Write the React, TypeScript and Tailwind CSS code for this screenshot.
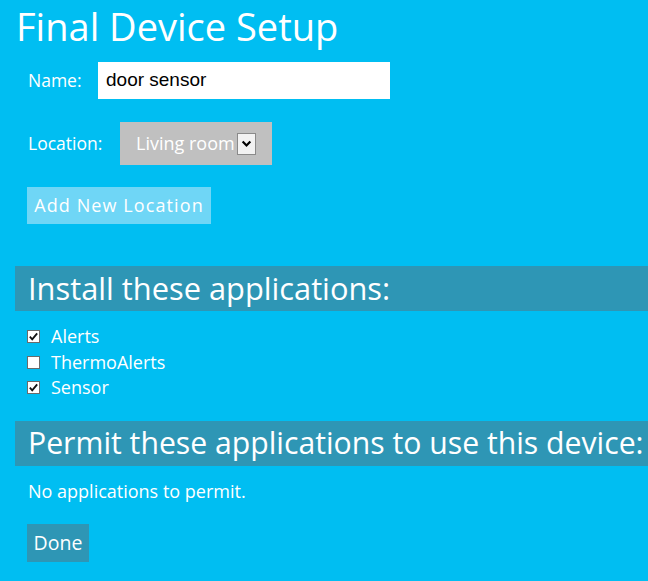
const apps = [
  { name: "Alerts", checked: true },
  { name: "ThermoAlerts", checked: false },
  { name: "Sensor", checked: true },
];

function CheckBox({ checked }: { checked: boolean }) {
  return (
    <span className="flex h-[13px] w-[13px] shrink-0 items-center justify-center border border-[#6b6b6b] bg-white">
      {checked && (
        <svg viewBox="0 0 12 12" className="h-[11px] w-[11px]" aria-hidden="true">
          <path d="M2 6.2l2.6 2.8L10 2.6" fill="none" stroke="#111" strokeWidth="2" />
        </svg>
      )}
    </span>
  );
}

export default function App() {
  return (
    <div className="min-h-[581px] w-full overflow-hidden bg-[#00bef2] font-['Open_Sans',sans-serif] text-white">
      <h1 className="h-[62px] pl-[16px] text-[38px] leading-[52px] font-normal">
        Final Device Setup
      </h1>

      <div className="flex items-center pl-[28px]">
        <span className="w-[70px] text-[17.5px]">Name:</span>
        <div className="flex h-[37px] w-[292px] items-center bg-white pl-[8px] font-['Liberation_Sans',sans-serif] text-[19px] text-black">
          door sensor
        </div>
      </div>

      <div className="mt-[23px] flex items-center pl-[28px]">
        <span className="w-[92px] text-[17.5px]">Location:</span>
        <div className="flex h-[43px] w-[152px] items-center bg-[#c0c0c0] pl-[16px] text-[18px]">
          <span>Living room</span>
          <span className="ml-[2px] flex h-[22px] w-[19px] items-center justify-center border border-[#8a8a8a] bg-[#f2f2f2]">
            <svg viewBox="0 0 10 10" className="h-[11px] w-[11px]" aria-hidden="true">
              <path d="M1.5 3.2L5 6.8l3.5-3.6" fill="none" stroke="#000" strokeWidth="2" />
            </svg>
          </span>
        </div>
      </div>

      <div className="mt-[22px] pl-[27px]">
        <button
          type="button"
          className="h-[37px] w-[184px] bg-[#6fd6f6] text-[18px] tracking-[1.1px] text-white"
        >
          Add New Location
        </button>
      </div>

      <div className="mt-[42px] ml-[15px] flex h-[45px] items-center bg-[#2e96b5] pl-[13px] text-[30.8px]">
        Install these applications:
      </div>

      <ul className="mt-[13px] flex flex-col pl-[27px]">
        {apps.map((app) => (
          <li key={app.name} className="flex h-[25.5px] items-center gap-[11px] text-[18px]">
            <CheckBox checked={app.checked} />
            <span>{app.name}</span>
          </li>
        ))}
      </ul>

      <div className="mt-[20px] ml-[15px] flex h-[45px] items-center whitespace-nowrap bg-[#2e96b5] pl-[13px] text-[30.2px]">
        Permit these applications to use this device:
      </div>

      <p className="mt-[14px] pl-[28px] text-[18px] leading-[22px]">No applications to permit.</p>

      <div className="mt-[22px] pl-[27px]">
        <button type="button" className="h-[38px] w-[62px] bg-[#2e96b5] text-[19.5px] text-white">
          Done
        </button>
      </div>
    </div>
  );
}
